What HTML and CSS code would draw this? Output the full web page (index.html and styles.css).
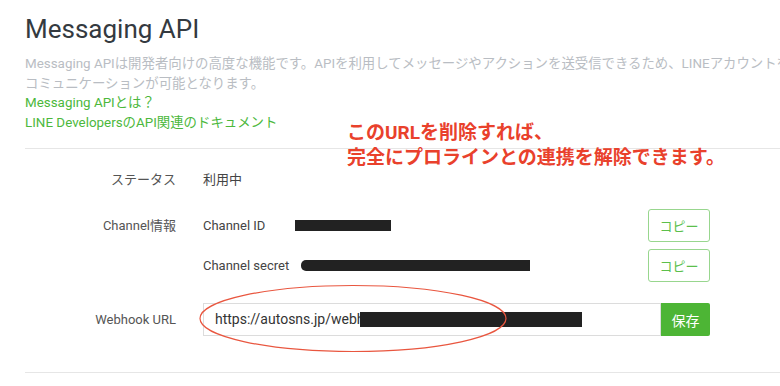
FILE: index.html
```html
<!DOCTYPE html>
<html lang="ja">
<head>
  <meta charset="UTF-8" />
  <meta name="viewport" content="width=device-width, initial-scale=1.0" />
  <title>Messaging API</title>
  <link rel="stylesheet" href="styles.css">
</head>
<body>
  <div class="page">
    <h1>Messaging API</h1>
    <p class="desc">Messaging APIは開発者向けの高度な機能です。APIを利用してメッセージやアクションを送受信できるため、LINEアカウントを<br>コミュニケーションが可能となります。</p>
    <a class="link" href="#">Messaging APIとは？</a>
    <a class="link" href="#">LINE DevelopersのAPI関連のドキュメント</a>

    <hr class="divider">

    <div class="row status-row">
      <div class="label">ステータス</div>
      <div class="value">利用中</div>
    </div>

    <div class="row channel-row">
      <div class="label">Channel情報</div>
      <div class="value">
        <div class="sub-row">
          <span class="name">Channel ID</span>
          <span class="redact redact-id"></span>
          <button class="copy">コピー</button>
        </div>
        <div class="sub-row">
          <span class="name">Channel secret</span>
          <span class="redact redact-secret"></span>
          <button class="copy">コピー</button>
        </div>
      </div>
    </div>

    <div class="row webhook-row">
      <div class="label">Webhook URL</div>
      <div class="value webhook">
        <div class="url-input">
          https://autosns.jp/webhook
          <span class="redact redact-url"></span>
        </div>
        <button class="save">保存</button>
      </div>
    </div>

    <hr class="divider bottom">

    <div class="note">このURLを削除すれば、<br>完全にプロラインとの連携を解除できます。</div>

    <svg class="circle" width="310" height="70" viewBox="0 0 310 70">
      <ellipse cx="155" cy="34.5" rx="153" ry="33" fill="none" stroke="#e9563f" stroke-width="1.2"/>
    </svg>
  </div>
</body>
</html>
```

FILE: styles.css
```css
body {
  margin: 0;
  font-family: Roboto, "Noto Sans CJK JP", sans-serif;
  background: #ffffff;
  color: #444;
  overflow: hidden;
}

.page {
  position: relative;
  box-sizing: border-box;
  padding: 13px 0 0 25px;
  height: 386px;
}

h1 {
  margin: 0;
  font-size: 26px;
  font-weight: 400;
  line-height: 32px;
  color: #343a40;
}

.desc {
  margin: 9px 0 0;
  font-size: 13.4px;
  line-height: 19.5px;
  color: #b9bdc3;
  white-space: nowrap;
}

.link {
  display: block;
  font-size: 13.4px;
  line-height: 19.5px;
  color: #4cb83c;
  text-decoration: none;
}

.divider {
  margin: 16px 0 0;
  border: none;
  border-top: 1px solid #e6e6e6;
}

.divider.bottom {
  margin-top: 36px;
}

.row {
  display: grid;
  grid-template-columns: 151px 507px;
  column-gap: 27px;
  font-size: 13px;
}

.label {
  text-align: right;
  color: #555;
}

.value {
  color: #444;
}

.status-row {
  margin-top: 21px;
  line-height: 20px;
}

.channel-row {
  margin-top: 19px;
  line-height: 33px;
}

.sub-row {
  display: flex;
  align-items: center;
  height: 33px;
}

.sub-row + .sub-row {
  margin-top: 7px;
}

.redact {
  display: inline-block;
  background: #222;
}

.redact-id {
  width: 96px;
  height: 11px;
  margin-left: 30px;
}

.redact-secret {
  width: 229px;
  height: 11px;
  margin-left: 12px;
  border-radius: 5px 0 0 5px;
}

.copy {
  margin-left: auto;
  width: 62px;
  height: 33px;
  padding: 0;
  border: 1px solid #98d68e;
  border-radius: 3px;
  background: #fff;
  color: #5cbf4c;
  font-family: inherit;
  font-size: 13px;
}

.webhook-row {
  margin-top: 21px;
  line-height: 33px;
}

.webhook {
  display: flex;
}

.url-input {
  position: relative;
  box-sizing: border-box;
  width: 458px;
  height: 33px;
  padding-left: 11px;
  border: 1px solid #dcdcdc;
  font-size: 14px;
  line-height: 31px;
  color: #333;
  overflow: hidden;
  white-space: nowrap;
}

.redact-url {
  position: absolute;
  left: 156px;
  top: 8px;
  width: 222px;
  height: 15px;
}

.save {
  width: 49px;
  height: 33px;
  padding: 0;
  border: none;
  border-radius: 0 2px 2px 0;
  background: #4db535;
  color: #fff;
  font-family: inherit;
  font-size: 14px;
}

.note {
  position: absolute;
  left: 347px;
  top: 120px;
  font-size: 19px;
  font-weight: 700;
  line-height: 25px;
  color: #e9412c;
  white-space: nowrap;
}

.circle {
  position: absolute;
  left: 198px;
  top: 284px;
}
```
